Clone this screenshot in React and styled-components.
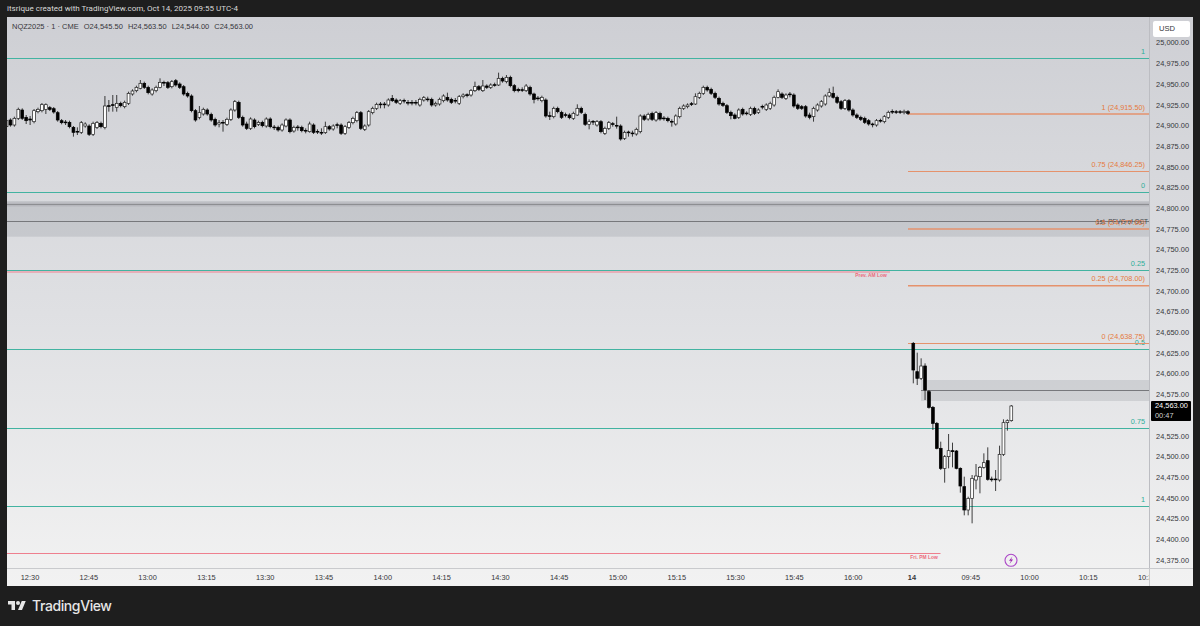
import React from "react";
import styled, { createGlobalStyle } from "styled-components";

const prices = Array.from({ length: 26 }, (_, i) =>
  (25000 - i * 25).toLocaleString("en-US", { minimumFractionDigits: 2 })
);

const times = ["12:30", "12:45", "13:00", "13:15", "13:30", "13:45", "14:00", "14:15", "14:30", "14:45", "15:00", "15:15", "15:30", "15:45", "16:00", "14", "09:45", "10:00", "10:15", "10:30"];

const tealLevels = [
  { y: 58.5, label: "1" },
  { y: 192.5, label: "0" },
  { y: 270.5, label: "0.25" },
  { y: 349.5, label: "0.5" },
  { y: 428.5, label: "0.75" },
  { y: 506.5, label: "1" },
];

const orangeLevels = [
  { y: 114, label: "1 (24,915.50)", w: 1.6 },
  { y: 171.5, label: "0.75 (24,846.25)", w: 1 },
  { y: 229, label: "0.5 (24,777.00)", w: 1.4 },
  { y: 285.7, label: "0.25 (24,708.00)", w: 1.4 },
  { y: 343.5, label: "0 (24,638.75)", w: 1 },
];

// candles read off the picture: [open, close, high, low], y offsets in thirds of a pixel
const session = [
  { base: 70, rows: [
    [170,152],[150,165],[165,145],[145,118],[120,145],[142,152,135,162],[147,150,138,165],[155,122],[125,118],[122,104],[118,104,100,132],[113,118],[116,126],[128,150],[152,158],[156,158,150,165],[157,170],[172,187,168,200],[184,186,172,195],[187,158],[168,162],[168,193],[193,160],[172,158],[160,170],[172,108,78,178],[107,109,90,125],[104,106,75,125],[112,100,75,125],[100,107],[110,97],[100,70],[72,63],[62,52],[55,40,30,58],[40,52],[52,68],[72,60],[62,52],[52,37,25,55],[37,39,32,48],[38,52],[50,35],[32,45],[42,52],[50,72],[70,78],[78,122],[122,150],[142,128,108,148],[132,118],[120,132],[133,150],[148,165],[162,158,150,172],[157,159,150,185],[163,148],[148,120],[120,95],
  ]},
  { base: 70, rows: [
    [97,142],[142,165],[162,175,155,180],[175,147],[150,170],[163,157],[157,167],[168,147],[147,170],[171,173,165,180],[172,180],[180,165],[168,150,145,172],[150,185],[183,172],[171,173,165,182],[172,182],[181,183,175,190],[185,162,155,188],[165,187],[184,186,178,192],[187,189,175,195],[188,170,155,192],[170,177],[177,168],[164,166,158,175],[165,190],[190,170],[172,158],[158,145],[152,128],[128,175],[178,168],[165,125],[128,115],[115,103],[102,104,96,115],[102,104,96,115],[105,90],[85,92,75,96],[90,97],[100,92],[91,93,86,100],[97,99,90,106],[97,99,90,106],[97,99,90,106],[105,88],[90,83],[87,89,80,95],[88,105],[105,100],[102,88],[92,78],[82,90,68,95],[88,97],[91,93,84,100],[100,80],[80,75],
  ]},
  { base: 70, rows: [
    [74,77,70,82],[75,62],[62,50,35,66],[50,58],[62,48,30,66],[48,52],[52,45],[44,46,38,50],[45,25,8,48],[25,33],[35,22,15,40],[22,47],[47,62],[58,62],[59,61,52,66],[62,48,42,66],[52,72],[72,88,68,100],[84,86,78,92],[92,82],[90,138],[137,139,125,150],[140,115],[115,125],[127,142],[134,136,128,142],[135,143],[145,130],[135,115,103,138],[115,127],[133,163],[163,155,148,178],[154,156,150,165],[165,155],[155,185],[190,175],[175,158],[161,163,156,170],[166,168,140,176],[168,207],[205,187],[186,188,182,200],[189,191,182,200],[192,178],[185,138],[138,148],[147,133],[130,148],[150,128],[130,147],[144,146,138,152],[145,152],[154,156,148,170],[162,138],[140,115],[115,108],[110,105],[101,103,96,108],[102,80,70,105],
  ]},
  { base: 80, rows: [
    [52,40],[40,22],[22,30],[28,40],[40,52],[55,72],[70,76],[77,97],[97,107,92,118],[105,115,100,118],[112,90],[88,102],[99,101,94,106],[103,85],[85,100],[97,90],[79,81,74,88],[88,75],[85,70],[75,52],[52,35,28,55],[42,52],[55,45],[42,44,36,52],[45,78],[75,85],[80,85],[80,108],[105,112,98,118],[110,85,80,125],[90,75],[78,65],[72,48],[48,38,25,52],[40,52,20,56],[52,67],[65,85],[85,62],[62,90],[90,105],[105,112],[112,118],[115,127],[122,132],[132,134,128,142],[135,122],[121,123,116,128],[125,110],[112,97],[94,96,88,102],[95,97,90,102],[95,97,90,102],[98,94],[95,100],
  ]},
];

const openingRun = [
  [40,120,36,160],[125,145,68,165],[145,108,85,150],[108,180,100,210],[185,232,180,236],[232,280,228,300],[280,355,276,358],[355,415,335,420],[415,380,375,458],[380,362,312,415],[362,365,338,412],[363,415,360,418],[415,468,412,488],[470,540,440,556],[540,505,500,556],[505,445,435,580],[450,438,402,478],[440,412,408,490],[412,398,370,416],[392,448,352,452],[447,449,440,455],[447,449,420,483],[450,373,347,455],[373,278,268,378],[278,272,268,302],[272,228,225,275],
];

const flatten = ({ base, rows }) =>
  rows.map(([o, c, h, l]) => ({
    open: base + o / 3,
    close: base + c / 3,
    high: base + (h ?? Math.min(o, c) - 5) / 3,
    low: base + (l ?? Math.max(o, c) + 5) / 3,
  }));

const firstCandles = session.flatMap(flatten);
const secondCandles = flatten({ base: 330, rows: openingRun });

function Candle({ x, candle }) {
  const { open, close, high, low } = candle;
  const falling = close > open;
  const top = Math.min(open, close);
  const height = Math.max(Math.abs(close - open), 0.8);
  return (
    <g>
      <line x1={x} x2={x} y1={high} y2={low} stroke="#111" strokeWidth="0.8" />
      <rect x={x - 1.4} y={top} width="2.8" height={height} fill={falling ? "#000" : "#fff"} stroke={falling ? "#000" : "#222"} strokeWidth="0.7" />
    </g>
  );
}

export default function App() {
  const step = (908 - 6.5) / (firstCandles.length - 1);
  return (
    <>
      <GlobalStyle />
      <Page>
        <Credit>itsrique created with TradingView.com, Oct 14, 2025 09:55 UTC-4</Credit>
        <Chart>
          <Plot>
            <Legend>
              <span>NQZ2025 · 1 · CME</span>
              <span>O24,545.50</span>
              <span>H24,563.50</span>
              <span>L24,544.00</span>
              <span>C24,563.00</span>
            </Legend>
            <PlotSvg viewBox="7 17 1143 551">
              <rect x="7" y="201" width="1143" height="35.7" fill="#787b86" opacity="0.2" />
              <rect x="7" y="202.5" width="1143" height="4" fill="#9a9ba0" opacity="0.35" />
              <line x1="7" x2="1150" y1="204.5" y2="204.5" stroke="#8d8e92" strokeWidth="1.2" />
              <line x1="7" x2="1150" y1="221.5" y2="221.5" stroke="#77787c" strokeWidth="1" />
              <rect x="921" y="380" width="229" height="21" fill="#787b86" opacity="0.2" />
              <line x1="921" x2="1150" y1="390.5" y2="390.5" stroke="#77787c" strokeWidth="1" />

              {tealLevels.map((l) => (
                <g key={l.y}>
                  <line x1="7" x2="1150" y1={l.y} y2={l.y} stroke="#42b3a1" strokeWidth="1.1" />
                  <LevelText x="1145" y={l.y - 4.5} fill="#2fae99">{l.label}</LevelText>
                </g>
              ))}

              <line x1="7" x2="890" y1="272" y2="272" stroke="#f08090" strokeWidth="1" />
              <SmallText x="871" y="277" fill="#ec6a7c">Prev. AM Low</SmallText>
              <line x1="7" x2="940.5" y1="553.5" y2="553.5" stroke="#ee7f8e" strokeWidth="1" />
              <SmallText x="924" y="558.5" fill="#ec6a7c">Fri. PM Low</SmallText>

              <FvgText x="1148" y="223.5" fill="#47484c">1st. PFVG of OCT</FvgText>
              {orangeLevels.map((l) => (
                <g key={l.y}>
                  <line x1="908" x2="1150" y1={l.y} y2={l.y} stroke="#e5926c" strokeWidth={l.w} />
                  <LevelText x="1145" y={l.y - 4.5} fill="#e57a3e">{l.label}</LevelText>
                </g>
              ))}

              {firstCandles.map((c, i) => (
                <Candle key={i} x={6.5 + i * step} candle={c} />
              ))}
              {secondCandles.map((c, i) => (
                <Candle key={i} x={913.3 + i * 3.92} candle={c} />
              ))}

              <circle cx="1011" cy="560.3" r="6" fill="none" stroke="#ab47c8" strokeWidth="1.1" />
              <path d="M1012.4 556.4l-3.4 4.4h2l-1.5 3.3 3.6-4.5h-2z" fill="#9c27b0" />
            </PlotSvg>
          </Plot>
          <PriceAxis>
            <UsdButton>USD</UsdButton>
            {prices.map((p) => (
              <PriceTick key={p}>{p === "24,550.00" ? "" : p}</PriceTick>
            ))}
            <LastPrice>
              <span>24,563.00</span>
              <Countdown>00:47</Countdown>
            </LastPrice>
          </PriceAxis>
          <TimeAxis>
            <TimeTrack>
              {times.map((t) => (
                <TimeTick key={t} $bold={t === "14"}>{t}</TimeTick>
              ))}
            </TimeTrack>
          </TimeAxis>
          <AxisCorner />
        </Chart>
        <Footer>
          <svg width="18" height="9" viewBox="0 4 36 18" fill="#e6e6e6">
            <path d="M14 22H7V11H0V4h14v18zM28 22h-8l7.5-18h8L28 22z" />
            <circle cx="20" cy="8" r="4" />
          </svg>
          <Brand>TradingView</Brand>
        </Footer>
      </Page>
    </>
  );
}

const GlobalStyle = createGlobalStyle`
  html, body {
    margin: 0;
    padding: 0;
    background: #1e1e1e;
  }
  body {
    font-family: "Liberation Sans", Arial, sans-serif;
  }
`;

const Page = styled.div`
  width: 1200px;
  height: 626px;
  background: #1e1e1e;
  display: flex;
  flex-direction: column;
  overflow: hidden;
`;

const Credit = styled.div`
  height: 17px;
  padding: 1px 7px 0;
  box-sizing: border-box;
  color: #d8d8d8;
  font-family: Roboto, "Liberation Sans", sans-serif;
  font-size: 8.05px;
  line-height: 16px;
  white-space: nowrap;
`;

const Chart = styled.div`
  width: 1186px;
  height: 569px;
  margin-left: 7px;
  display: grid;
  grid-template-columns: 1143px 43px;
  grid-template-rows: 551px 18px;
  background: linear-gradient(180deg, #cecfd4 0%, #dfe0e3 52%, #f2f2f2 100%);
`;

const Plot = styled.div`
  position: relative;
  border-right: 1px solid #bcbdc2;
  width: 1142px;
  overflow: hidden;
`;

const PlotSvg = styled.svg`
  display: block;
  width: 1143px;
  height: 551px;
`;

const Legend = styled.div`
  position: absolute;
  left: 5px;
  top: 5px;
  display: flex;
  gap: 5px;
  color: #36363a;
  font-size: 7.5px;
  line-height: 10px;
  white-space: nowrap;
`;

const LevelText = styled.text`
  font-size: 7.3px;
  text-anchor: end;
`;

const FvgText = styled(LevelText)`
  font-size: 6.4px;
`;

const SmallText = styled.text`
  font-size: 4.9px;
  text-anchor: middle;
  font-weight: 700;
`;

const PriceAxis = styled.div`
  position: relative;
  padding-top: 15.6px;
  display: flex;
  flex-direction: column;
`;

const PriceTick = styled.div`
  flex: 0 0 20.7px;
  display: flex;
  align-items: center;
  justify-content: flex-end;
  padding-right: 4px;
  color: #36363a;
  font-size: 7.4px;
`;

const UsdButton = styled.div`
  position: absolute;
  left: 3px;
  top: 4px;
  width: 37px;
  height: 16px;
  padding-left: 6px;
  box-sizing: border-box;
  background: #fff;
  border-radius: 2px;
  color: #36363a;
  font-size: 7.6px;
  line-height: 16px;
`;

const LastPrice = styled.div`
  position: absolute;
  left: 1px;
  top: 384px;
  width: 39.5px;
  height: 19.5px;
  background: #000;
  border-radius: 1px;
  color: #fff;
  font-size: 7.4px;
  line-height: 9.5px;
  display: flex;
  flex-direction: column;
  justify-content: center;
  padding-left: 4px;
  box-sizing: border-box;
`;

const Countdown = styled.span`
  color: #cfcfcf;
`;

const TimeAxis = styled.div`
  border-top: 1px solid #c9cacd;
  border-right: 1px solid #c9cacd;
  box-sizing: border-box;
  overflow: hidden;
`;

const TimeTrack = styled.div`
  display: flex;
  margin-left: -6.4px;
`;

const TimeTick = styled.div`
  flex: 0 0 58.8px;
  text-align: center;
  color: #36363a;
  font-size: 7.4px;
  line-height: 17px;
  font-weight: ${(p) => (p.$bold ? 700 : 400)};
`;

const AxisCorner = styled.div`
  border-top: 1px solid #c9cacd;
`;

const Footer = styled.div`
  flex: 1;
  display: flex;
  align-items: center;
  gap: 6px;
  padding: 0 0 1px 8px;
`;

const Brand = styled.span`
  color: #e6e6e6;
  font-family: Inter, "Liberation Sans", sans-serif;
  font-size: 14px;
  font-weight: 500;
  letter-spacing: -0.4px;
`;
